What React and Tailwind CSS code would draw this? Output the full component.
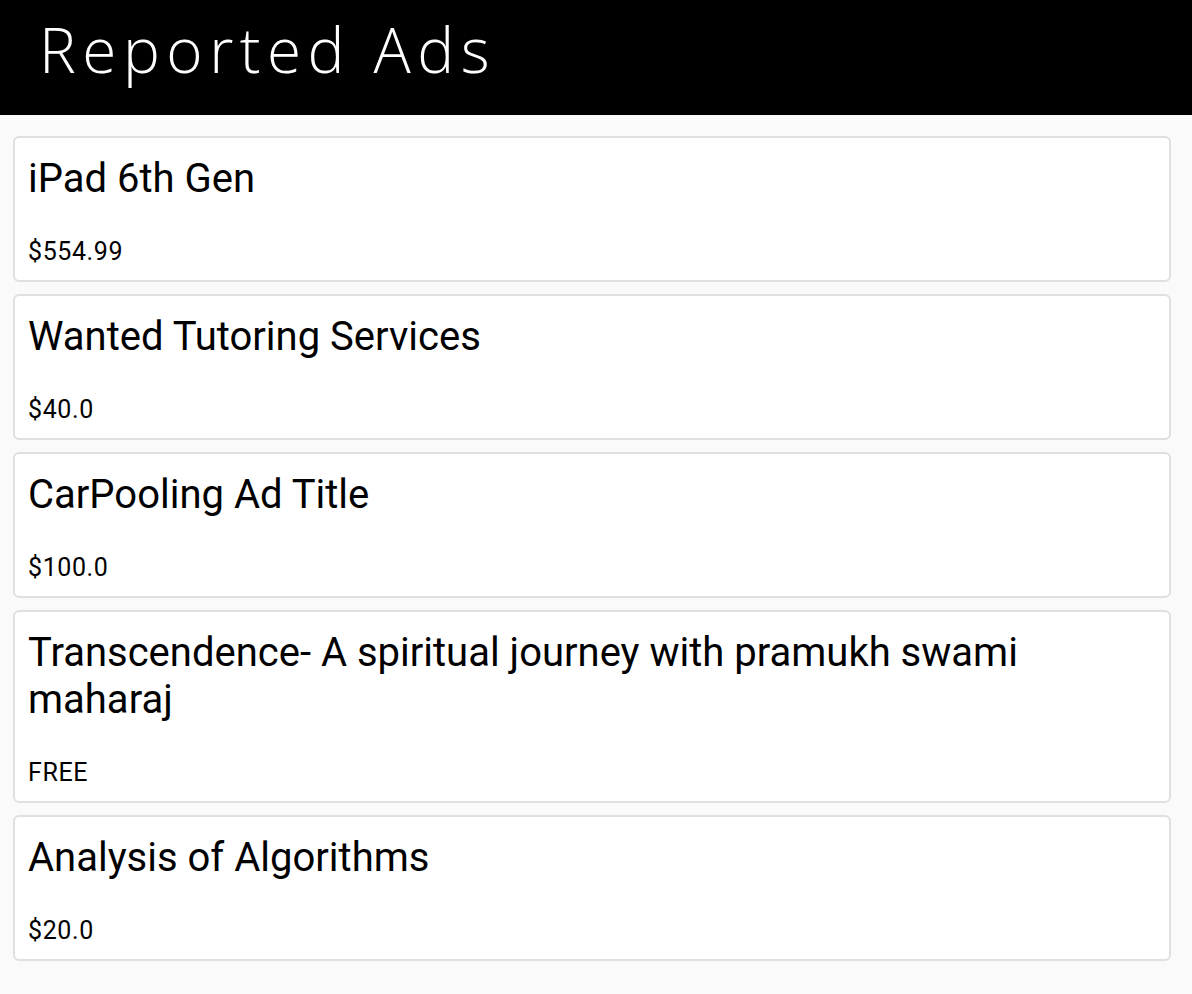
const ads = [
  { title: 'iPad 6th Gen', price: '$554.99' },
  { title: 'Wanted Tutoring Services', price: '$40.0' },
  { title: 'CarPooling Ad Title', price: '$100.0' },
  { title: 'Transcendence- A spiritual journey with pramukh swami maharaj', price: 'FREE' },
  { title: 'Analysis of Algorithms', price: '$20.0' },
]

function AdCard({ title, price }) {
  return (
    <div className="bg-white border-2 border-[#e0e0e0] rounded-[6px] pl-[13px] pr-[120px] pt-[17px] pb-[14px]">
      <h2 className="text-[40px] leading-[47px] text-black">{title}</h2>
      <p className="mt-[35px] text-[25px] leading-[29px] tracking-[0.6px] text-black">{price}</p>
    </div>
  )
}

export default function App() {
  return (
    <div className="min-h-[994px] bg-[#fafafa] font-['Roboto',sans-serif]">
      <header className="h-[115px] bg-black pl-[39px] pt-[13px]">
        <h1 className="font-['Open_Sans',sans-serif] font-light text-[62px] leading-[72px] text-white tracking-[6.5px]">
          Reported Ads
        </h1>
      </header>
      <div className="flex flex-col gap-[12px] pl-[13px] pr-[21px] pt-[21px]">
        {ads.map((ad) => (
          <AdCard key={ad.title} {...ad} />
        ))}
      </div>
    </div>
  )
}
